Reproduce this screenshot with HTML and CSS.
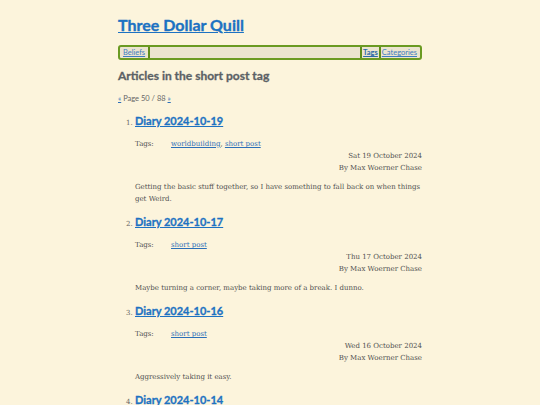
FILE: index.html
```html
<!DOCTYPE html>
<html>
<head>
<meta charset="utf-8">
<link rel="stylesheet" href="styles.css">
</head>
<body>
<div class="page">
  <h1 class="site-title"><a href="#">Three Dollar Quill</a></h1>
  <nav class="nav">
    <a class="nav-item sep-right" href="#">Beliefs</a>
    <span class="nav-spacer"></span>
    <a class="nav-item sep-left current" href="#">Tags</a>
    <a class="nav-item sep-left" href="#">Categories</a>
  </nav>
  <h2 class="section-title">Articles in the short post tag</h2>
  <p class="pager"><a href="#">«</a> Page 50 / 88 <a href="#">»</a></p>
  <ol class="articles">
    <li class="article">
      <h3 class="article-title"><a href="#">Diary 2024-10-19</a></h3>
      <div class="tags"><span class="tags-label">Tags:</span><span><a href="#">worldbuilding</a>, <a href="#">short post</a></span></div>
      <div class="meta">Sat 19 October 2024</div>
      <div class="meta">By Max Woerner Chase</div>
      <p class="summary">Getting the basic stuff together, so I have something to fall back on when things get Weird.</p>
    </li>
    <li class="article">
      <h3 class="article-title"><a href="#">Diary 2024-10-17</a></h3>
      <div class="tags"><span class="tags-label">Tags:</span><span><a href="#">short post</a></span></div>
      <div class="meta">Thu 17 October 2024</div>
      <div class="meta">By Max Woerner Chase</div>
      <p class="summary">Maybe turning a corner, maybe taking more of a break. I dunno.</p>
    </li>
    <li class="article">
      <h3 class="article-title"><a href="#">Diary 2024-10-16</a></h3>
      <div class="tags"><span class="tags-label">Tags:</span><span><a href="#">short post</a></span></div>
      <div class="meta">Wed 16 October 2024</div>
      <div class="meta">By Max Woerner Chase</div>
      <p class="summary">Aggressively taking it easy.</p>
    </li>
    <li class="article">
      <h3 class="article-title"><a href="#">Diary 2024-10-14</a></h3>
      <div class="tags"><span class="tags-label">Tags:</span><span><a href="#">short post</a></span></div>
      <div class="meta">Mon 14 October 2024</div>
      <div class="meta">By Max Woerner Chase</div>
      <p class="summary">Taking it easy.</p>
    </li>
  </ol>
</div>
</body>
</html>
```
FILE: styles.css
```css
html, body {
  margin: 0;
  padding: 0;
  background: #fcf4dc;
}
body {
  font-family: "DejaVu Serif", "Liberation Serif", serif;
  font-size: 7px;
  line-height: 12px;
  color: #505050;
}
.page {
  width: 304px;
  margin: 0 auto;
  padding-top: 14px;
}
a {
  color: #2c6fb8;
}
.site-title {
  margin: 0;
  font-family: Lato, "Open Sans", sans-serif;
  font-size: 16px;
  line-height: 22px;
  font-weight: 700;
  -webkit-text-stroke: 0.35px #1d72c2;
}
.site-title a {
  color: #1d72c2;
}
.nav {
  margin-top: 9px;
  display: flex;
  align-items: stretch;
  height: 11px;
  border: 2px solid #6a9a22;
  border-radius: 3px;
  background: #ebe4cf;
  padding: 0 2px;
  font-family: Lato, "Open Sans", sans-serif;
  font-size: 7.5px;
  line-height: 11px;
}
.nav-item {
  color: #3d7cc0;
  padding: 0 1px;
}
.nav-item.current {
  font-weight: 700;
  color: #2a6aa8;
}
.sep-right {
  border-right: 2px solid #5e8d1a;
  padding-right: 3px;
}
.sep-left {
  border-left: 2px solid #5e8d1a;
  padding-left: 1px;
}
.nav-spacer {
  flex: 1;
}
.section-title {
  margin: 8px 0 0;
  font-family: Lato, "Open Sans", sans-serif;
  font-size: 12px;
  line-height: 16px;
  font-weight: 700;
  color: #5b6165;
  -webkit-text-stroke: 0.3px #5b6165;
}
.pager {
  margin: 9px 0 0;
  font-family: Lato, "Open Sans", sans-serif;
  font-size: 7.5px;
  line-height: 12px;
  color: #666;
}
.articles {
  margin: 8px 0 0;
  padding-left: 17px;
}
.article::marker {
  font-size: 7px;
  color: #666;
}
.article-title {
  margin: 0 0 9px;
  font-family: Lato, "Open Sans", sans-serif;
  font-size: 11px;
  line-height: 16px;
  font-weight: 700;
  -webkit-text-stroke: 0.3px #1d72c2;
}
.article-title a {
  color: #1d72c2;
}
.tags {
  display: flex;
}
.tags-label {
  width: 36px;
}
.meta {
  text-align: right;
}
.summary {
  margin: 7px 0 9px;
}
```
